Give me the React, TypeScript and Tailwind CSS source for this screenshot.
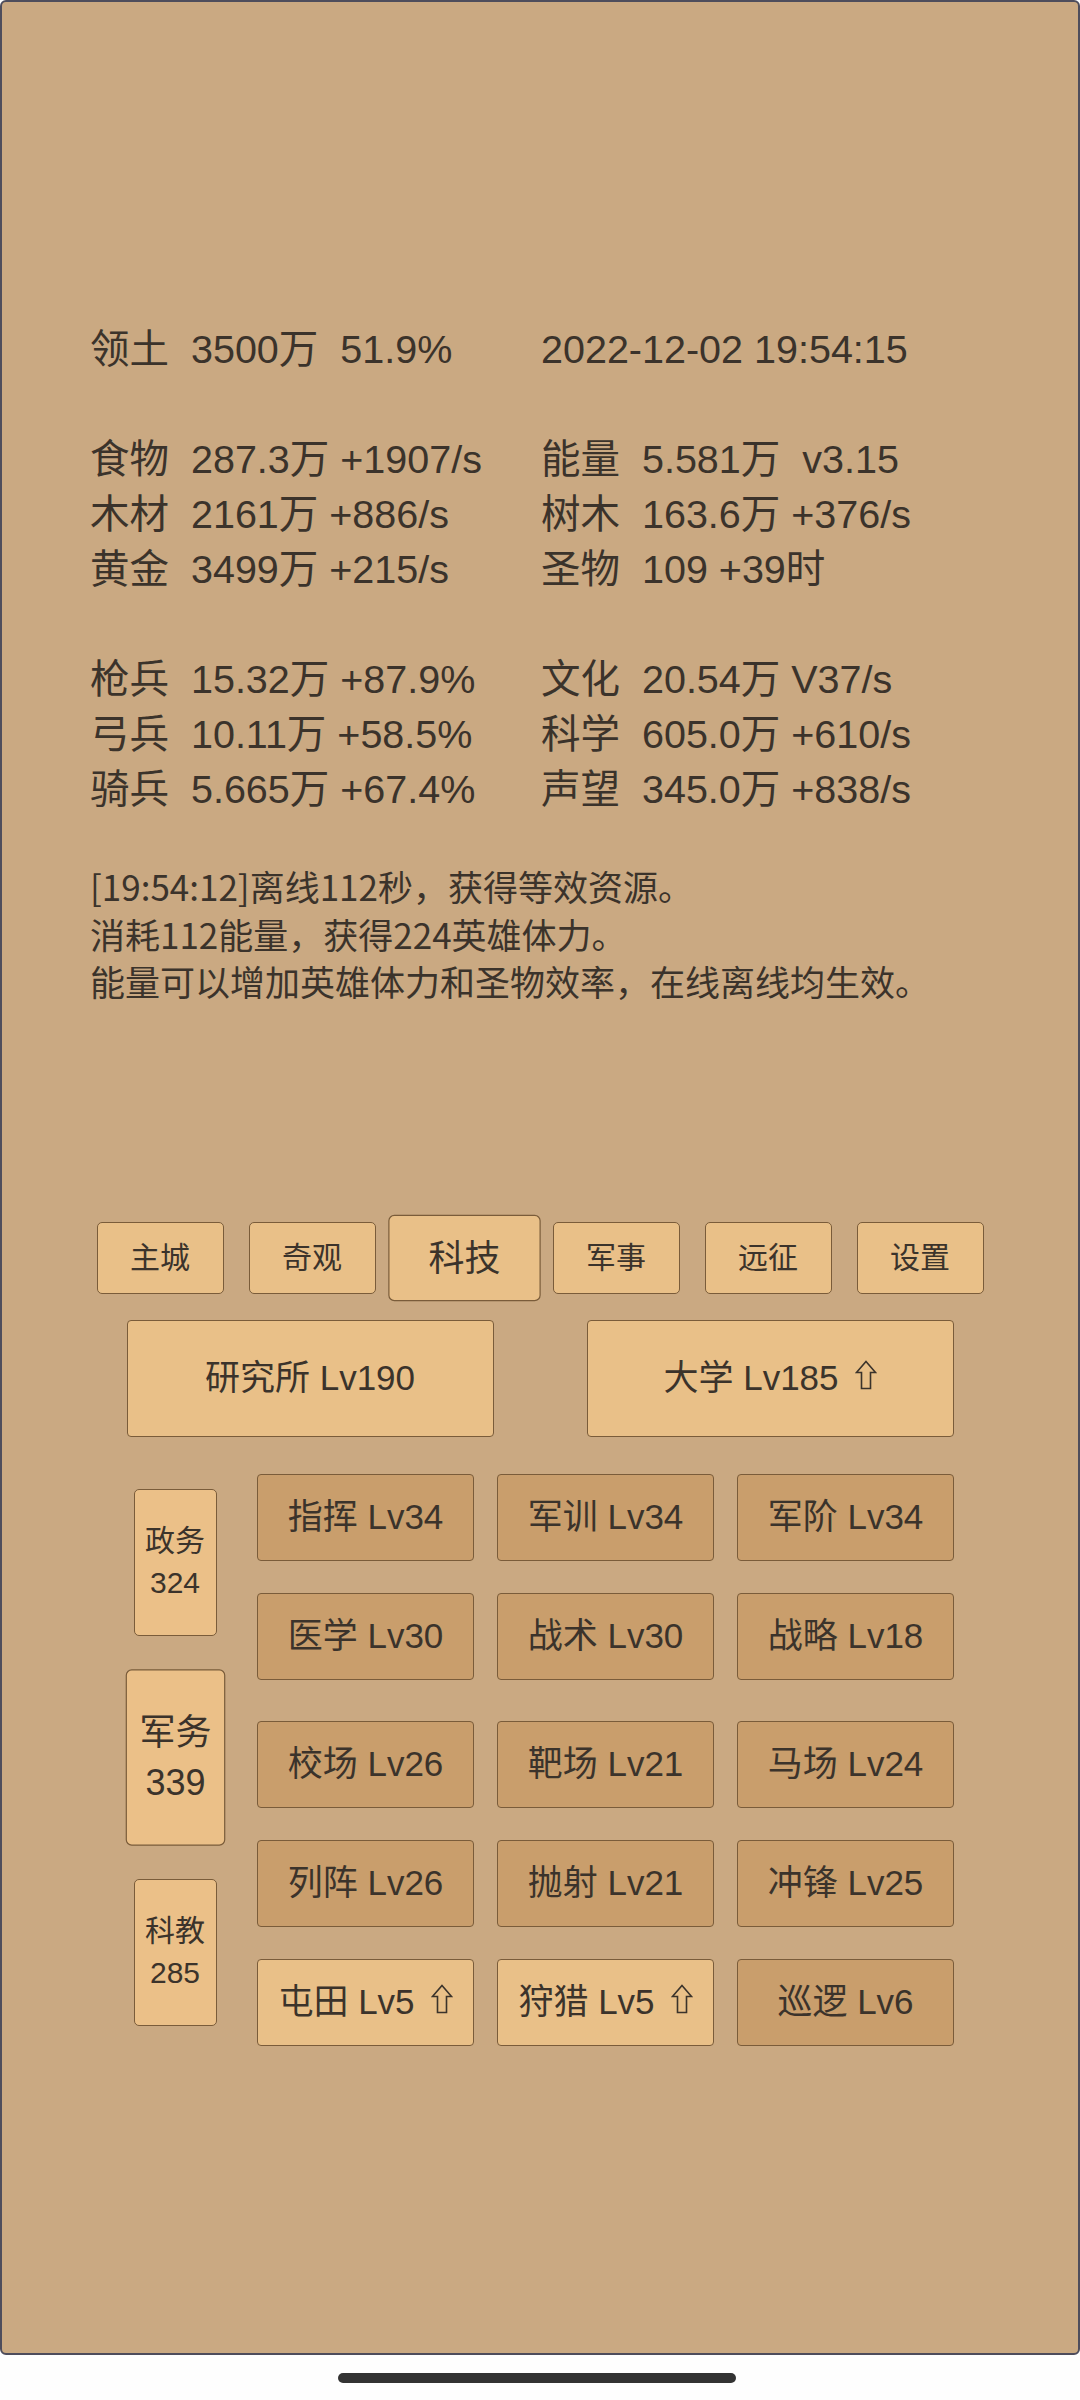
import React from "react";

function Arrow() {
  return (
    <svg
      width="22"
      height="30"
      viewBox="0 0 22 30"
      className="inline-block align-baseline ml-[16px]"
    >
      <path
        d="M11 1.5 L20.5 12.5 L15.5 12.5 L15.5 28.5 L6.5 28.5 L6.5 12.5 L1.5 12.5 Z"
        fill="none"
        stroke="#3b332b"
        strokeWidth="1.6"
      />
    </svg>
  );
}

const leftLines = [
  "领土  3500万  51.9%",
  "",
  "食物  287.3万 +1907/s",
  "木材  2161万 +886/s",
  "黄金  3499万 +215/s",
  "",
  "枪兵  15.32万 +87.9%",
  "弓兵  10.11万 +58.5%",
  "骑兵  5.665万 +67.4%",
];

const rightLines = [
  "2022-12-02 19:54:15",
  "",
  "能量  5.581万  v3.15",
  "树木  163.6万 +376/s",
  "圣物  109 +39时",
  "",
  "文化  20.54万 V37/s",
  "科学  605.0万 +610/s",
  "声望  345.0万 +838/s",
];

const logLines = [
  "[19:54:12]离线112秒，获得等效资源。",
  "消耗112能量，获得224英雄体力。",
  "能量可以增加英雄体力和圣物效率，在线离线均生效。",
];

const tabs = ["主城", "奇观", "科技", "军事", "远征", "设置"];

type Cell = { label: string; up?: boolean };

const rows: { cells: Cell[]; mt: string }[] = [
  { cells: [{ label: "指挥 Lv34" }, { label: "军训 Lv34" }, { label: "军阶 Lv34" }], mt: "mt-0" },
  { cells: [{ label: "医学 Lv30" }, { label: "战术 Lv30" }, { label: "战略 Lv18" }], mt: "mt-[32px]" },
  { cells: [{ label: "校场 Lv26" }, { label: "靶场 Lv21" }, { label: "马场 Lv24" }], mt: "mt-[41px]" },
  { cells: [{ label: "列阵 Lv26" }, { label: "抛射 Lv21" }, { label: "冲锋 Lv25" }], mt: "mt-[32px]" },
  { cells: [{ label: "屯田 Lv5", up: true }, { label: "狩猎 Lv5", up: true }, { label: "巡逻 Lv6" }], mt: "mt-[32px]" },
];

export default function App() {
  return (
    <div className="w-[1080px] h-[2400px] bg-[#fefefe] text-[#3b332b] [font-family:'Liberation_Sans','Noto_Sans_CJK_SC',sans-serif]">
      <div className="h-[2355px] border-2 border-[#4e4d5c] rounded-[6px] bg-[#caa982] flex flex-col">
        {/* stats */}
        <div className="pt-[320px] pl-[88px] flex text-[39.5px] leading-[55px] whitespace-pre">
          <div className="w-[451px]">
            {leftLines.map((l, i) => (
              <div key={i} className="h-[55px]">{l}</div>
            ))}
          </div>
          <div>
            {rightLines.map((l, i) => (
              <div key={i} className="h-[55px]">{l}</div>
            ))}
          </div>
        </div>

        {/* log */}
        <div className="mt-[45px] pl-[88px] text-[35px] leading-[47.5px] whitespace-pre [font-family:'Noto_Sans_CJK_SC',sans-serif]">
          {logLines.map((l, i) => (
            <div key={i}>{l}</div>
          ))}
        </div>

        {/* tabs */}
        <div className="mt-[217px] flex justify-center gap-[25px]">
          {tabs.map((t) => (
            <div
              key={t}
              className={`w-[127px] h-[72px] flex items-center justify-center rounded-[5px] border border-[#7a5c3a] bg-[#e9c088] text-[30px] ${
                t === "科技" ? "scale-[1.2]" : ""
              }`}
            >
              {t}
            </div>
          ))}
        </div>

        {/* big buttons */}
        <div className="mt-[26px] flex justify-center gap-[93px]">
          <div className="w-[367px] h-[117px] flex items-center justify-center rounded-[4px] border border-[#7a5c3a] bg-[#e9c088] text-[35px]">
            研究所 Lv190
          </div>
          <div className="w-[367px] h-[117px] flex items-center justify-center rounded-[4px] border border-[#7a5c3a] bg-[#e9c088] text-[35px]">
            <span>
              大学 Lv185
              <Arrow />
            </span>
          </div>
        </div>

        {/* grid section */}
        <div className="mt-[37px] ml-[124px] flex gap-[33px]">
          <div className="w-[98px] flex flex-col items-center">
            <div className="mt-[15px] w-[83px] h-[147px] flex flex-col items-center justify-center rounded-[5px] border border-[#7a5c3a] bg-[#ebc088] text-[30px] leading-[42px]">
              <div>政务</div>
              <div>324</div>
            </div>
            <div className="mt-[48px] w-[83px] h-[147px] flex flex-col items-center justify-center rounded-[5px] border border-[#7a5c3a] bg-[#ebc088] text-[30px] leading-[42px] scale-[1.2]">
              <div>军务</div>
              <div>339</div>
            </div>
            <div className="mt-[48px] w-[83px] h-[147px] flex flex-col items-center justify-center rounded-[5px] border border-[#7a5c3a] bg-[#ebc088] text-[30px] leading-[42px]">
              <div>科教</div>
              <div>285</div>
            </div>
          </div>
          <div className="flex flex-col">
            {rows.map((r, ri) => (
              <div key={ri} className={`${r.mt} flex gap-[23px]`}>
                {r.cells.map((c) => (
                  <div
                    key={c.label}
                    className={`w-[217px] h-[87px] flex items-center justify-center rounded-[4px] border border-[#7a5c3a] text-[35px] ${
                      c.up ? "bg-[#e9c088]" : "bg-[#c99e6c]"
                    }`}
                  >
                    <span>
                      {c.label}
                      {c.up ? <Arrow /> : null}
                    </span>
                  </div>
                ))}
              </div>
            ))}
          </div>
        </div>
      </div>

      {/* home indicator */}
      <div className="mt-[18px] ml-[338px] w-[398px] h-[10px] rounded-full bg-[#333333]" />
    </div>
  );
}
